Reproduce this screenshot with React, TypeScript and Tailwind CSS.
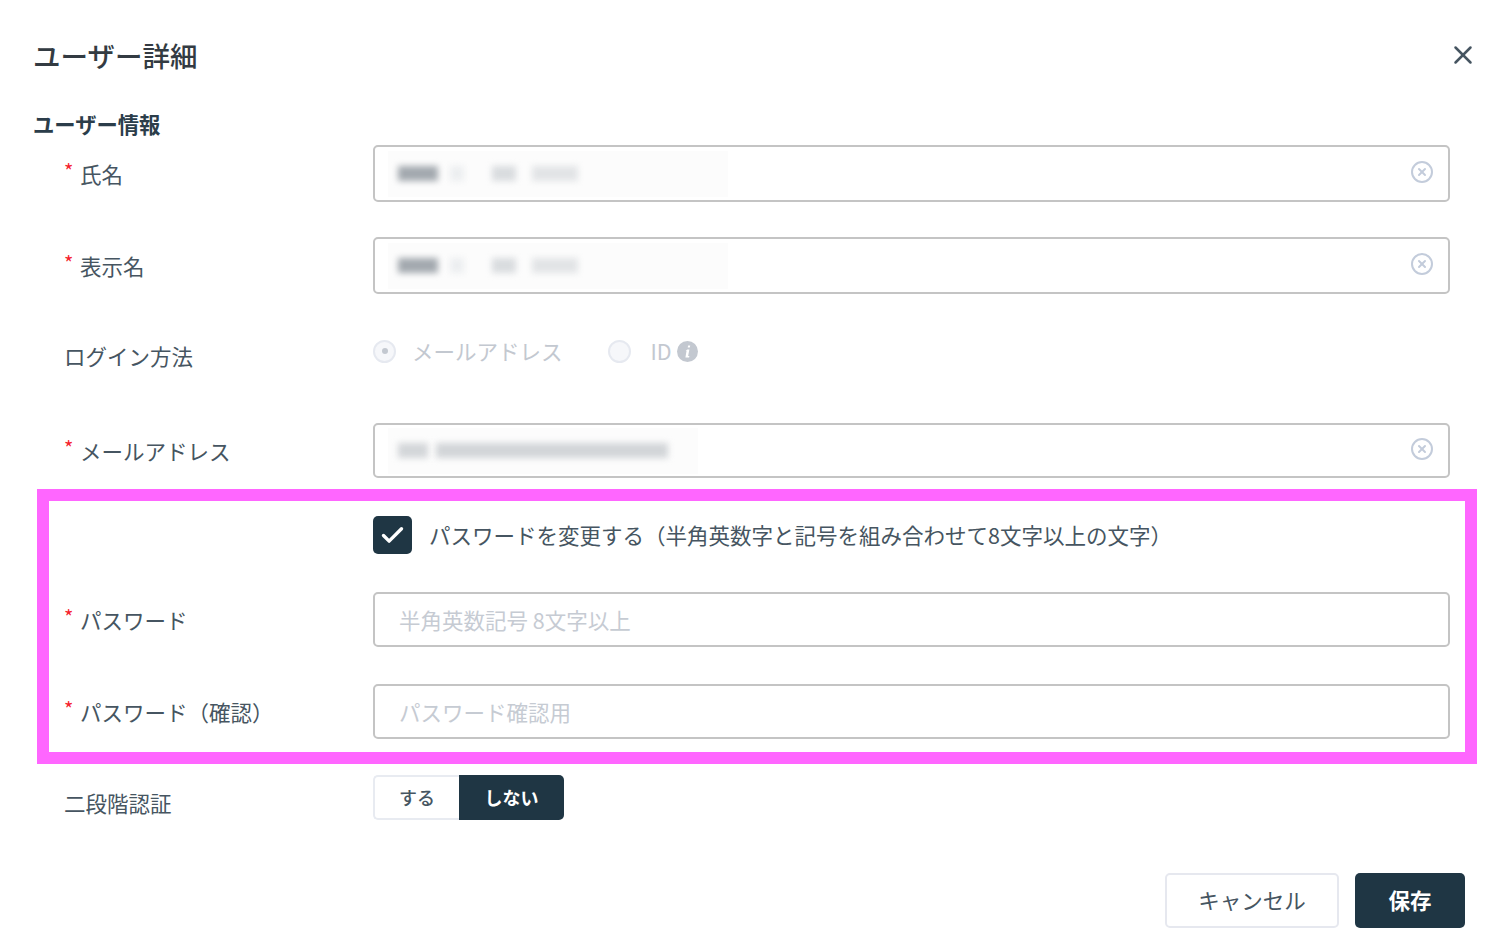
import { CircleX, X, Check } from "lucide-react";

const font = "font-['Noto_Sans_CJK_JP','Noto_Sans',sans-serif]";

function Label({ text, required, className }: { text: string; required?: boolean; className?: string }) {
    return (
        <div className={`relative w-[309px] shrink-0 text-[21.5px] leading-[30px] text-[#465561] ${className ?? ""}`}>
            {required && <span className="absolute left-0 top-[-3px] text-[20px] text-[#f5222d]">*</span>}
            <span className={required ? "pl-[16px]" : ""}>{text}</span>
        </div>
    );
}

// blurred personal data inside the first three inputs
function BlurredValue({ bars, width }: { bars: { w: number; gap: number; color: string }[]; width: string }) {
    return (
        <div className={`flex h-[46px] items-center bg-[#fcfcfc] pl-[10px] ${width}`}>
            {bars.map((b, i) => (
                <div
                    key={i}
                    className="h-[15px] blur-[3px]"
                    style={{ width: b.w, marginLeft: b.gap, backgroundColor: b.color }}
                />
            ))}
        </div>
    );
}

const nameBars = [
    { w: 40, gap: 0, color: "#a3a9af" },
    { w: 14, gap: 12, color: "#eceef0" },
    { w: 24, gap: 28, color: "#d9dcdf" },
    { w: 46, gap: 16, color: "#e2e4e6" },
];

const mailBars = [
    { w: 30, gap: 0, color: "#d3d6d9" },
    { w: 232, gap: 8, color: "#d2d5d8" },
];

function ClearInput({ bars, patch, tall }: { bars: typeof nameBars; patch: string; tall?: boolean }) {
    return (
        <div className={`flex w-[1077px] items-center justify-between rounded-[5px] border-2 border-[#c4c4c4] bg-white pl-[13px] pr-[14px] ${tall ? "h-[57px]" : "h-[55px]"}`}>
            <BlurredValue bars={bars} width={patch} />
            <CircleX className="mb-[4px] h-[24px] w-[24px] text-[#c3ccdb]" strokeWidth={2} />
        </div>
    );
}

function PasswordInput({ placeholder }: { placeholder: string }) {
    return (
        <input
            readOnly
            placeholder={placeholder}
            className="h-[55px] w-[1077px] rounded-[5px] border-2 border-[#c4c4c4] bg-white px-[24px] text-[21.5px] outline-none placeholder:text-[#c6cbd3]"
        />
    );
}

function Radio({ checked }: { checked?: boolean }) {
    return (
        <span className="flex h-[23px] w-[23px] items-center justify-center rounded-full border-2 border-[#e6e9f0] bg-[#f6f7fa]">
            {checked && <span className="h-[6px] w-[6px] rounded-full bg-[#c3c8d0]" />}
        </span>
    );
}

export default function App() {
    return (
        <div className={`h-[941px] w-[1500px] overflow-hidden bg-white pt-[33px] pl-[33px] ${font}`}>
            <div className="flex h-[44px] items-center justify-between pr-[22px]">
                <h1 className="text-[27.5px] font-medium leading-[44px] text-[#333b42]">ユーザー詳細</h1>
                <X className="h-[30px] w-[30px] text-[#465561]" strokeWidth={2} />
            </div>

            <h2 className="mt-[32px] h-[30px] text-[21.3px] font-bold leading-[30px] text-[#2b3d4a]">ユーザー情報</h2>

            <div className="mt-[6px] flex items-center pl-[31px]">
                <Label text="氏名" required />
                <ClearInput bars={nameBars} patch="w-[340px]" tall />
            </div>

            <div className="mt-[35px] flex items-center pl-[31px]">
                <Label text="表示名" required />
                <ClearInput bars={nameBars} patch="w-[340px]" tall />
            </div>

            <div className="mt-[42px] flex h-[30px] pl-[31px]">
                <Label text="ログイン方法" className="mt-[5px]" />
                <div className="flex items-center text-[21.5px] text-[#c3c8d0]">
                    <Radio checked />
                    <span className="ml-[16px]">メールアドレス</span>
                    <span className="ml-[45px]"><Radio /></span>
                    <span className="ml-[20px]">ID</span>
                    <svg viewBox="0 0 20 20" className="ml-[5px] h-[21px] w-[21px]">
                        <circle cx="10" cy="10" r="10" fill="#c3c8d0" />
                        <path d="M10.6 4.2h2l-.4 2h-2zM9.8 8h2l-1.2 6.2h1.2l-.3 1.4H8l1.1-6.2H8.2z" fill="#fff" />
                    </svg>
                </div>
            </div>

            <div className="mt-[57px] flex items-center pl-[31px]">
                <Label text="メールアドレス" required />
                <ClearInput bars={mailBars} patch="w-[310px]" />
            </div>

            <section className="mt-[11px] ml-[4px] h-[275px] w-[1440px] border-[12px] border-[#ff66ff] pl-[15px]">
                <div className="mt-[15px] flex items-center pl-[309px]">
                    <span className="flex h-[38px] w-[39px] shrink-0 items-center justify-center rounded-[5px] bg-[#1f3644]">
                        <Check className="h-[27px] w-[27px] text-white" strokeWidth={3} />
                    </span>
                    <span className="ml-[17px] text-[21.5px] leading-[30px] text-[#465561]">
                        パスワードを変更する（半角英数字と記号を組み合わせて8文字以上の文字）
                    </span>
                </div>
                <div className="mt-[38px] flex items-center">
                    <Label text="パスワード" required />
                    <PasswordInput placeholder="半角英数記号 8文字以上" />
                </div>
                <div className="mt-[37px] flex items-center">
                    <Label text="パスワード（確認）" required />
                    <PasswordInput placeholder="パスワード確認用" />
                </div>
            </section>

            <div className="mt-[11px] flex h-[45px] pl-[31px]">
                <Label text="二段階認証" className="mt-[13px]" />
                <div className="flex text-[18px] font-medium">
                    <span className="flex w-[86px] items-center justify-center rounded-l-[5px] border-2 border-r-0 border-[#e8ebf1] bg-white text-[#465561]">する</span>
                    <span className="flex w-[105px] items-center justify-center rounded-r-[5px] bg-[#1f3644] font-bold text-white">しない</span>
                </div>
            </div>

            <div className="mt-[53px] flex justify-end gap-[16px] pr-[35px]">
                <button className="h-[55px] w-[174px] rounded-[5px] border-2 border-[#e6e8ef] bg-white text-[21.5px] text-[#465561]">キャンセル</button>
                <button className="h-[55px] w-[110px] rounded-[5px] bg-[#1f3644] text-[21.5px] font-bold text-white">保存</button>
            </div>
        </div>
    );
}
